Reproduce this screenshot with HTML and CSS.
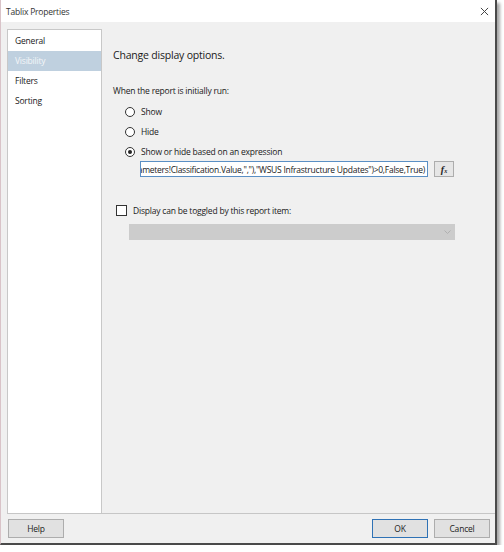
FILE: index.html
```html
<!DOCTYPE html>
<html lang="en">
<head>
  <meta charset="UTF-8">
  <title>Tablix Properties</title>
  <link rel="stylesheet" href="styles.css">
</head>
<body>

  <div class="window">
    <div class="titlebar">
      <span>Tablix Properties</span>
      <svg class="close" width="9" height="9" viewBox="0 0 10 10">
        <path d="M1 1 L9 9 M9 1 L1 9" stroke="#444" stroke-width="1.1" />
      </svg>
    </div>

    <div class="dialog">
      <div class="main">
        <ul class="nav">
          <li>General</li>
          <li class="active">Visibility</li>
          <li>Filters</li>
          <li>Sorting</li>
        </ul>

        <div class="page">
          <h2>Change display options.</h2>
          <p class="label">When the report is initially run:</p>

          <div class="radios">
            <label class="radio"><span class="dot"></span>Show</label>
            <label class="radio"><span class="dot"></span>Hide</label>
            <label class="radio checked"><span class="dot"></span>Show or hide based on an expression</label>
          </div>

          <div class="expr-row">
            <div class="expr">
              <span>=IIF(InStr(Join(Parameters!Classification.Value,","),"WSUS Infrastructure Updates")&gt;0,False,True)</span>
            </div>
            <button class="fx">f<small>x</small></button>
          </div>

          <label class="check"><span class="box"></span>Display can be toggled by this report item:</label>

          <div class="select">
            <svg width="7" height="5" viewBox="0 0 7 5"><path d="M0.5 0.5 L3.5 3.5 L6.5 0.5" fill="none" stroke="#b0b0b0" /></svg>
          </div>
        </div>
      </div>

      <div class="footer">
        <button class="btn">Help</button>
        <div class="right">
          <button class="btn primary">OK</button>
          <button class="btn">Cancel</button>
        </div>
      </div>
    </div>
  </div>

</body>
</html>
```

FILE: styles.css
```css
body {
  margin: 0;
  background: #ffffff;
  font-family: "Open Sans", "Noto Sans", sans-serif;
  color: #1a1a1a;
}

.window {
  width: 497px;
  height: 545px;
  display: flex;
  flex-direction: column;
  border-left: 1px solid #d9c3c8;
  border-right: 2px solid #4a4a4a;
  border-bottom: 2px solid #4a4a4a;
  box-shadow: 3px 3px 3px rgba(0,0,0,0.35);
  box-sizing: border-box;
}

.titlebar {
  height: 22px;
  background: #ffffff;
  display: flex;
  align-items: center;
  justify-content: space-between;
  padding: 0 6px 0 5px;
  font-size: 8.5px;
  letter-spacing: -0.2px;
  color: #333;
}

.dialog {
  flex: 1;
  background: #f0f0f0;
  display: flex;
  flex-direction: column;
  padding: 7px 0 0 6px;
}

.main {
  display: flex;
  height: 484px;
  border-bottom: 1px solid #c6c6c6;
}

.nav {
  list-style: none;
  margin: 0;
  padding: 1px 0 0;
  width: 95px;
  background: #ffffff;
  border: 1px solid #c8c8c8;
  border-bottom: none;
  box-sizing: border-box;
  font-size: 8.5px;
  letter-spacing: -0.2px;
}

.nav li {
  height: 20px;
  line-height: 20px;
  padding-left: 7px;
}

.nav li.active {
  background: #bfd0df;
  color: #f4f6f8;
}

.page {
  flex: 1;
  padding: 0 0 0 11px;
  font-size: 8.5px;
  letter-spacing: -0.2px;
}

.page h2 {
  margin: 19px 0 0;
  height: 14px;
  line-height: 14px;
  font-size: 10.5px;
  font-weight: normal;
}

.label {
  margin: 23px 0 0;
  height: 12px;
  line-height: 12px;
}

.radios {
  margin: 7px 0 0 12px;
  display: flex;
  flex-direction: column;
  gap: 5px;
}

.radio {
  display: flex;
  align-items: center;
  height: 15px;
}

.dot {
  width: 8px;
  height: 8px;
  border: 1px solid #333;
  border-radius: 50%;
  background: #fff;
  margin-right: 6px;
  position: relative;
}

.radio.checked .dot::after {
  content: "";
  position: absolute;
  left: 2px;
  top: 2px;
  width: 4px;
  height: 4px;
  border-radius: 50%;
  background: #222;
}

.expr-row {
  display: flex;
  align-items: center;
  margin: 2px 0 0 27px;
  gap: 6px;
}

.expr {
  width: 288px;
  height: 16px;
  border: 1px solid #5a8fc4;
  background: #fff;
  box-sizing: border-box;
  overflow: hidden;
  display: flex;
  justify-content: flex-end;
  align-items: center;
  white-space: nowrap;
  padding-right: 2px;
  font-size: 8.5px;
  letter-spacing: -0.25px;
}

.fx {
  width: 20px;
  height: 16px;
  border: 1px solid #adadad;
  background: #e6e6e6;
  padding: 0;
  font-family: "Liberation Serif", serif;
  font-style: italic;
  font-weight: bold;
  font-size: 10px;
  color: #222;
}

.fx small {
  font-size: 6px;
}

.check {
  display: flex;
  align-items: center;
  margin: 26px 0 0 3px;
  height: 14px;
}

.box {
  width: 9px;
  height: 9px;
  border: 1px solid #333;
  background: #fff;
  margin-right: 6px;
}

.select {
  margin: 7px 0 0 16px;
  width: 326px;
  height: 16px;
  background: #cccccc;
  display: flex;
  justify-content: flex-end;
  align-items: center;
  padding-right: 4px;
  box-sizing: border-box;
}

.footer {
  display: flex;
  justify-content: space-between;
  padding: 5px 5px 0 1px;
}

.right {
  display: flex;
  gap: 6px;
}

.btn {
  width: 56px;
  height: 19px;
  border: 1px solid #adadad;
  background: #e1e1e1;
  font-family: "Open Sans", "Noto Sans", sans-serif;
  font-size: 8.5px;
  letter-spacing: -0.2px;
  color: #222;
  padding: 0;
}

.btn.primary {
  border: 1px solid #2f72b5;
}
```
